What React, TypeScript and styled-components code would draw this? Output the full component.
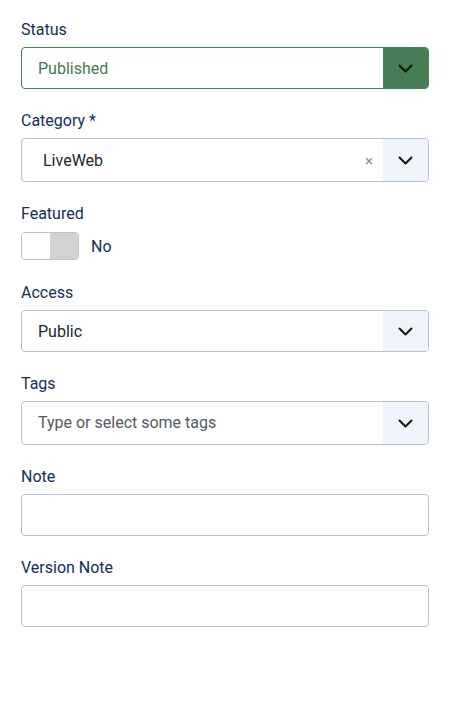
import React from "react";
import { styled, createGlobalStyle } from "styled-components";

const GlobalStyle = createGlobalStyle`
  body {
    margin: 0;
    background: #fff;
    font-family: Roboto, "Noto Sans", sans-serif;
  }
`;

const Chevron = () => (
  <svg width="15" height="9" viewBox="0 0 15 9" fill="none">
    <path d="M1.5 1.5 L7.5 7.5 L13.5 1.5" stroke="#111" strokeWidth="2" strokeLinecap="round" strokeLinejoin="round" />
  </svg>
);

const App = () => {
  return (
    <Page>
      <GlobalStyle />
      <Field>
        <Label>Status</Label>
        <SelectBox $variant="success">
          <Value $color="#3f7b4f">Published</Value>
          <Toggle $variant="success">
            <Chevron />
          </Toggle>
        </SelectBox>
      </Field>

      <Field>
        <Label>Category *</Label>
        <SelectBox $height={44}>
          <Value $indent={21}>LiveWeb</Value>
          <Clear>×</Clear>
          <Toggle>
            <Chevron />
          </Toggle>
        </SelectBox>
      </Field>

      <Field>
        <Label>Featured</Label>
        <SwitchRow>
          <Switcher>
            <SwitchHalf />
            <SwitchHalf $off />
          </Switcher>
          <SwitchText>No</SwitchText>
        </SwitchRow>
      </Field>

      <Field>
        <Label>Access</Label>
        <SelectBox>
          <Value>Public</Value>
          <Toggle>
            <Chevron />
          </Toggle>
        </SelectBox>
      </Field>

      <Field>
        <Label>Tags</Label>
        <SelectBox $height={44}>
          <Value $color="#555a61" $shift={-2}>Type or select some tags</Value>
          <Toggle>
            <Chevron />
          </Toggle>
        </SelectBox>
      </Field>

      <Field>
        <Label>Note</Label>
        <TextInput type="text" />
      </Field>

      <Field>
        <Label>Version Note</Label>
        <TextInput type="text" />
      </Field>
    </Page>
  );
};

export default App;

const Page = styled.div`
  width: 408px;
  padding: 18px 0 40px 21px;
`;

const Field = styled.div`
  margin-bottom: 20px;
`;

const Label = styled.div`
  font-size: 16px;
  line-height: 24px;
  color: #132f55;
  margin-bottom: 5px;
`;

const SelectBox = styled.div<{ $variant?: string; $height?: number }>`
  display: flex;
  align-items: stretch;
  height: ${(p) => p.$height ?? 42}px;
  box-sizing: border-box;
  border: 1px solid ${(p) => (p.$variant === "success" ? "#457d54" : "#b4c2d6")};
  border-radius: 4px;
  overflow: hidden;
  background: #fff;
`;

const Value = styled.div<{ $color?: string; $indent?: number; $shift?: number }>`
  flex: 1;
  display: flex;
  align-items: center;
  padding-left: ${(p) => p.$indent ?? 16}px;
  margin-top: ${(p) => p.$shift ?? 0}px;
  font-size: 16px;
  color: ${(p) => p.$color ?? "#22262a"};
`;

const Clear = styled.div`
  display: flex;
  align-items: center;
  padding: 2px 10px 0 0;
  font-size: 15px;
  color: #8a8f96;
`;

const Toggle = styled.div<{ $variant?: string }>`
  width: 45px;
  display: flex;
  align-items: center;
  justify-content: center;
  background: ${(p) => (p.$variant === "success" ? "#457d54" : "#eff4fb")};
`;

const SwitchRow = styled.div`
  display: flex;
  align-items: center;
  height: 30px;
`;

const Switcher = styled.div`
  display: flex;
  width: 58px;
  height: 28px;
  box-sizing: border-box;
  border: 1px solid #b4c2d6;
  border-radius: 4px;
  overflow: hidden;
`;

const SwitchHalf = styled.div<{ $off?: boolean }>`
  flex: 1;
  background: ${(p) => (p.$off ? "#d3d3d3" : "#fff")};
`;

const SwitchText = styled.span`
  margin-left: 12px;
  font-size: 16px;
  color: #132f55;
`;

const TextInput = styled.input`
  display: block;
  width: 100%;
  height: 42px;
  box-sizing: border-box;
  border: 1px solid #b4c2d6;
  border-radius: 4px;
  padding: 0 16px;
  font-family: inherit;
  font-size: 16px;
  outline: none;
`;
